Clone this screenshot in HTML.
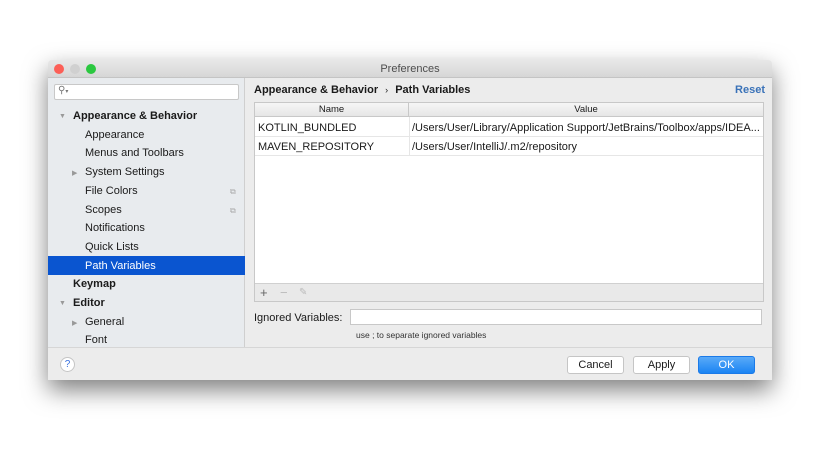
<!DOCTYPE html>
<html><head><meta charset="utf-8"><style>
*{box-sizing:border-box;margin:0;padding:0}
body{width:820px;height:449px;background:#fff;font-family:"Liberation Sans",sans-serif;font-size:11px;color:#1a1a1a;position:relative;overflow:hidden}
.win{position:absolute;left:48px;top:60px;width:724px;height:320px;background:#ececec;box-shadow:0 10px 24px rgba(0,0,0,.5);border-radius:4px 4px 0 0;overflow:hidden}
.title{position:absolute;left:0;top:0;width:100%;height:18px;background:linear-gradient(#e8e8e8,#d6d6d6);border-bottom:1px solid #c4c4c4;text-align:center;line-height:18px;color:#4d4d4d;font-size:11px}
.dot{position:absolute;top:4px;width:10px;height:10px;border-radius:50%}
.side{position:absolute;left:0;top:18px;width:197px;height:269px;background:#e8ebee;border-right:1px solid #cfcfcf}
.search{position:absolute;left:6px;top:6px;width:185px;height:16px;background:#fff;border:1px solid #c8c8c8;border-radius:2px}
.it{position:absolute;left:0;width:197px;height:19px;line-height:19px}
.b{font-weight:bold}
.sel{background:#0a55d0;color:#fff}
.tri{position:absolute;color:#999;font-size:7px}
.main{position:absolute;left:198px;top:18px;width:526px;height:269px}
.tbl{position:absolute;left:8px;top:24px;width:510px;height:200px;background:#fff;border:1px solid #c8c8c8}
.th{position:absolute;top:0;height:14px;line-height:14px;background:linear-gradient(#f6f6f6,#e6e6e6);border-bottom:1px solid #c8c8c8;text-align:center;font-size:9.5px}
.row{position:absolute;left:0;width:508px;height:19px;line-height:20px;border-bottom:1px solid #e6e6e6}
.c{position:absolute;top:0}
.foot{position:absolute;left:0;top:287px;width:100%;height:33px;background:#ececec;border-top:1px solid #d6d6d6}
.btn{position:absolute;top:8px;height:18px;line-height:17px;text-align:center;background:#fff;border:1px solid #c5c5c5;border-radius:3px;font-size:11px}
</style></head><body>
<div class="win">
<div class="title">Preferences
<div class="dot" style="left:6px;background:#fc5f57"></div>
<div class="dot" style="left:22px;background:#d0d0d0"></div>
<div class="dot" style="left:38px;background:#2bc840"></div>
</div>
<div class="side">
<div class="search"><span style="position:absolute;left:3px;top:0;color:#777;font-size:10px">&#9906;<span style="font-size:6px">▾</span></span></div>
<span class="tri" style="left:11px;top:35px">▼</span>
<div class="it b" style="top:29px;padding-left:25px">Appearance &amp; Behavior</div>
<div class="it" style="top:48px;padding-left:37px">Appearance</div>
<div class="it" style="top:66px;padding-left:37px">Menus and Toolbars</div>
<span class="tri" style="left:24px;top:91px">▶</span>
<div class="it" style="top:85px;padding-left:37px">System Settings</div>
<div class="it" style="top:104px;padding-left:37px">File Colors<span style="position:absolute;left:182px;color:#aaa;font-size:8px">⧉</span></div>
<div class="it" style="top:123px;padding-left:37px">Scopes<span style="position:absolute;left:182px;color:#aaa;font-size:8px">⧉</span></div>
<div class="it" style="top:141px;padding-left:37px">Notifications</div>
<div class="it" style="top:160px;padding-left:37px">Quick Lists</div>
<div class="it sel" style="top:178px;padding-left:37px;line-height:20px">Path Variables</div>
<div class="it b" style="top:197px;padding-left:25px">Keymap</div>
<span class="tri" style="left:11px;top:222px">▼</span>
<div class="it b" style="top:216px;padding-left:25px">Editor</div>
<span class="tri" style="left:24px;top:241px">▶</span>
<div class="it" style="top:235px;padding-left:37px">General</div>
<div class="it" style="top:253px;padding-left:37px">Font</div>
</div>
<div class="main">
<div class="b" style="position:absolute;left:8px;top:6px">Appearance &amp; Behavior <span style="font-weight:normal;margin:0 4px;font-size:9px">›</span> Path Variables</div>
<div class="b" style="position:absolute;right:7px;top:6px;color:#3a72b8">Reset</div>
<div class="tbl">
<div class="th" style="left:0;width:154px;border-right:1px solid #c8c8c8">Name</div>
<div class="th" style="left:154px;width:354px">Value</div>
<div class="row" style="top:15px"><span class="c" style="left:3px">KOTLIN_BUNDLED</span><span class="c" style="left:157px">/Users/User/Library/Application Support/JetBrains/Toolbox/apps/IDEA...</span></div>
<div class="row" style="top:34px"><span class="c" style="left:3px">MAVEN_REPOSITORY</span><span class="c" style="left:157px">/Users/User/IntelliJ/.m2/repository</span></div>
<div style="position:absolute;left:154px;top:14px;width:1px;height:39px;background:#e6e6e6"></div>
<div style="position:absolute;left:0;top:180px;width:508px;height:18px;background:#e9e9e9;border-top:1px solid #d0d0d0;color:#666;font-size:13px;line-height:17px"><span style="position:absolute;left:5px">+</span><span style="position:absolute;left:25px;color:#bbb">−</span><span style="position:absolute;left:44px;color:#bbb;font-size:10px">✎</span></div>
</div>
<div style="position:absolute;left:8px;top:234px">Ignored Variables:</div>
<div style="position:absolute;left:104px;top:231px;width:412px;height:16px;background:#fff;border:1px solid #c8c8c8"></div>
<div style="position:absolute;left:110px;top:252px;font-size:8.5px;color:#333">use ; to separate ignored variables</div>
</div>
<div class="foot">
<div style="position:absolute;left:12px;top:9px;width:15px;height:15px;border-radius:50%;background:#fff;border:1px solid #c5c5c5;text-align:center;line-height:13px;color:#3a72e0;font-size:10px">?</div>
<div class="btn" style="left:519px;width:57px">Cancel</div>
<div class="btn" style="left:585px;width:57px">Apply</div>
<div class="btn" style="left:650px;width:57px;background:linear-gradient(#5aaaf8,#1b84f3);border-color:#1b7ae8;color:#fff">OK</div>
</div>
</div>
</body></html>
